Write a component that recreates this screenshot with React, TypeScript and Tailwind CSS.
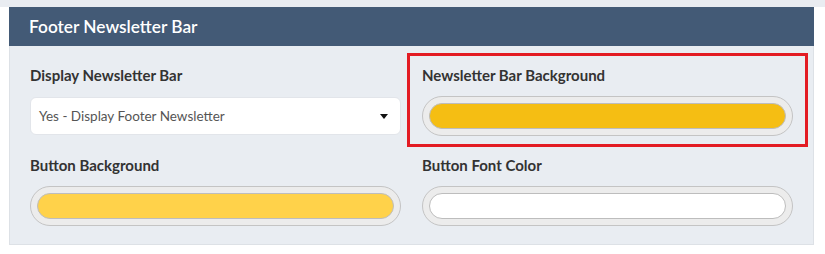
import React from 'react'

const font = { fontFamily: 'Lato, "Noto Sans", sans-serif' }

function ColorPill({ color }: { color: string }) {
  return (
    <div className="h-10 rounded-full border border-[#c4c4c4] bg-[#ececec] p-[6px]">
      <div className="h-full rounded-full border border-[#bdbdbd]" style={{ backgroundColor: color }} />
    </div>
  )
}

function Field({ label, children }: { label: string; children: React.ReactNode }) {
  return (
    <div className="flex flex-col">
      <label className="mb-3 h-[18px] text-[15px] font-bold leading-[18px] text-[#333]">{label}</label>
      {children}
    </div>
  )
}

export default function App() {
  return (
    <div className="relative h-[254px] w-[825px] bg-white" style={font}>
      <div className="h-[7px] bg-[#e9ecf1]" />
      <div className="ml-[9px] w-[805px]">
        {/* Header */}
        <div className="flex h-[39px] items-center bg-[#435a76] px-5">
          <h2 className="text-[17.3px] font-semibold text-white">Footer Newsletter Bar</h2>
        </div>

        {/* Body */}
        <div className="grid grid-cols-2 gap-x-[21px] gap-y-5 border border-t-0 border-[#dde1e6] bg-[#e9edf2] px-5 pb-[18px] pt-5">
          <Field label="Display Newsletter Bar">
            <div className="my-px flex h-[38px] items-center justify-between rounded-md border border-[#e2e5ea] bg-white pl-2 pr-3">
              <span className="text-[13.5px] text-[#555]">Yes - Display Footer Newsletter</span>
              <svg width="8" height="5" viewBox="0 0 8 5">
                <path d="M0 0h8L4 5z" fill="#111" />
              </svg>
            </div>
          </Field>
          <Field label="Newsletter Bar Background">
            <ColorPill color="#f5be13" />
          </Field>
          <Field label="Button Background">
            <ColorPill color="#ffd24a" />
          </Field>
          <Field label="Button Font Color">
            <ColorPill color="#ffffff" />
          </Field>
        </div>
      </div>

      {/* highlight annotation */}
      <div className="pointer-events-none absolute left-[407px] top-[53px] h-[94px] w-[401px] border-[3px] border-[#e31b23]" />
    </div>
  )
}
